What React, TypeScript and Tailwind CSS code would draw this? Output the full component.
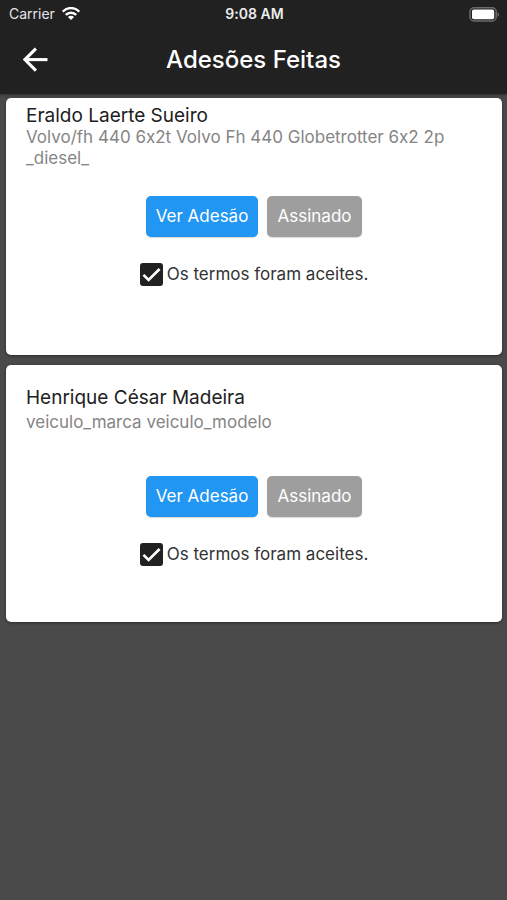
import { useState } from "react";

type Adesao = {
  id: string;
  nome: string;
  veiculo: string;
  compact: boolean;
};

const adesoes: Adesao[] = [
  {
    id: "eraldo",
    nome: "Eraldo Laerte Sueiro",
    veiculo: "Volvo/fh 440 6x2t Volvo Fh 440 Globetrotter 6x2 2p _diesel_",
    compact: true,
  },
  {
    id: "henrique",
    nome: "Henrique César Madeira",
    veiculo: "veiculo_marca veiculo_modelo",
    compact: false,
  },
];

function WifiIcon() {
  return (
    <svg width="18" height="14" viewBox="0 0 18 14" fill="none" stroke="#fff" strokeWidth="2.5" aria-hidden="true">
      <path d="M0.8 4.7C5.4 -0.1 12.6 -0.1 17.2 4.7" />
      <path d="M3.8 7.9C6.8 4.9 11.2 4.9 14.2 7.9" />
      <path d="M9 13.1L5.9 10C7.6 8.3 10.4 8.3 12.1 10Z" fill="#fff" stroke="none" />
    </svg>
  );
}

function BatteryIcon() {
  return (
    <svg width="31" height="15" viewBox="0 0 31 15" aria-hidden="true">
      <rect x="1" y="0.8" width="26.2" height="13.2" rx="4" fill="none" stroke="#6b6b6b" strokeWidth="1.5" />
      <rect x="3" y="2.6" width="22.2" height="9.6" rx="1.8" fill="#fff" />
      <path d="M28.5 5.2C30.6 5.9 30.6 9.1 28.5 9.8Z" fill="#6b6b6b" />
    </svg>
  );
}

function BackIcon() {
  return (
    <svg width="26" height="26" viewBox="0 0 26 26" fill="none" stroke="#fff" strokeWidth="3.1" aria-hidden="true">
      <path d="M25.5 12.6H3.5" />
      <path d="M13.9 1.6L2.9 12.6L13.9 23.6" />
    </svg>
  );
}

function Card({ item }: { item: Adesao }) {
  const [checked, setChecked] = useState(true);
  const inputId = `termos-${item.id}`;
  return (
    <li className="h-[257px] rounded-[5px] bg-white px-5 shadow-[0_1px_3px_rgba(0,0,0,0.45)]">
      <div className={item.compact ? "h-[98px] pt-[7px]" : "h-[111px] pt-[22px]"}>
        <h2 className="text-[19px] leading-[22px] text-[#212121]">{item.nome}</h2>
        <p
          className={
            item.compact
              ? "text-[17px] leading-[21px] text-[#858585]"
              : "mt-[3px] text-[17px] leading-[21px] text-[#858585]"
          }
        >
          {item.veiculo}
        </p>
      </div>
      <div className="flex justify-center gap-[9px]">
        <button
          type="button"
          className="h-[41px] w-28 rounded-[5px] bg-[#2196f3] text-[17px] text-white shadow-[0_1px_1px_rgba(0,0,0,0.15)]"
        >
          Ver Adesão
        </button>
        <button
          type="button"
          className="h-[41px] w-[95px] rounded-[5px] bg-[#9e9e9e] text-[17px] text-white shadow-[0_1px_1px_rgba(0,0,0,0.15)]"
        >
          Assinado
        </button>
      </div>
      <div className="mt-6 flex items-center justify-center gap-1">
        <span className="grid size-[23px] place-items-center">
          <input
            id={inputId}
            type="checkbox"
            checked={checked}
            onChange={(e) => setChecked(e.target.checked)}
            className="col-start-1 row-start-1 size-[23px] appearance-none rounded-[3px] border-2 border-[#212121] bg-white checked:bg-[#212121]"
          />
          {checked && (
            <svg
              className="pointer-events-none col-start-1 row-start-1"
              width="23"
              height="23"
              viewBox="0 0 23 23"
              fill="none"
              stroke="#fff"
              strokeWidth="2.6"
              aria-hidden="true"
            >
              <path d="M3.4 11.8L8.6 17L19.6 6" />
            </svg>
          )}
        </span>
        <label htmlFor={inputId} className="text-[17px] leading-[26px] text-[#333]">
          Os termos foram aceites.
        </label>
      </div>
    </li>
  );
}

export default function App() {
  return (
    <div className="min-h-screen bg-[#4a4a4a] font-['Inter',sans-serif] [font-feature-settings:'calt'_0]">
      <header className="h-[94px] bg-[#212121] text-white shadow-[0_1px_3px_rgba(0,0,0,0.4)]">
        <div className="grid h-7 grid-cols-3 items-center pr-[7px] pl-[9px]">
          <div className="flex items-center gap-[7px] text-sm text-[#e6e6e6]">
            Carrier
            <WifiIcon />
          </div>
          <div className="text-center text-sm font-semibold text-[#ececec]">9:08 AM</div>
          <div className="flex justify-end">
            <BatteryIcon />
          </div>
        </div>
        <div className="grid h-16 grid-cols-[56px_1fr_56px] items-center">
          <button type="button" aria-label="Voltar" className="flex h-14 items-center pl-[22px]">
            <BackIcon />
          </button>
          <h1 className="text-center text-2xl font-medium">Adesões Feitas</h1>
        </div>
      </header>
      <main>
        <ul className="flex flex-col gap-[10px] pt-1 pr-[5px] pb-4 pl-[6px]">
          {adesoes.map((item) => (
            <Card key={item.id} item={item} />
          ))}
        </ul>
      </main>
    </div>
  );
}
